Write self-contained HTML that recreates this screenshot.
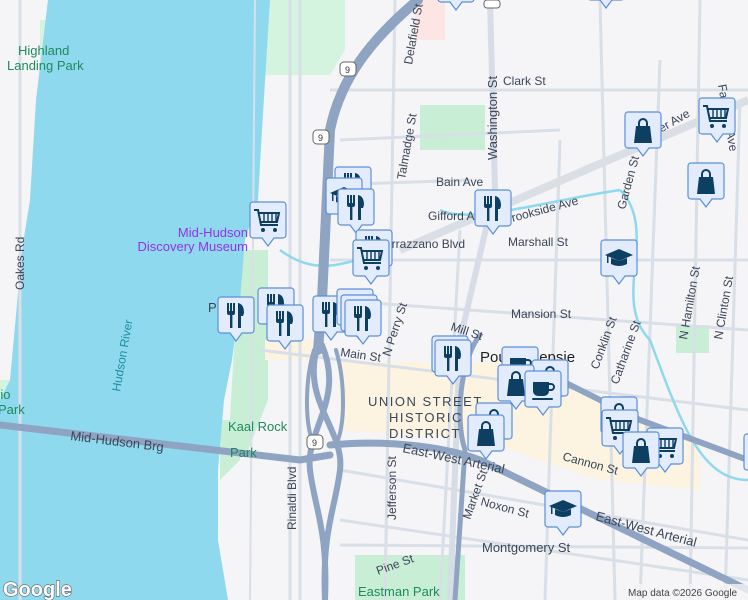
<!DOCTYPE html>
<html><head><meta charset="utf-8"><style>
html,body{margin:0;padding:0;width:748px;height:600px;overflow:hidden;background:#f5f4f6}
svg{display:block}
text{font-family:"Liberation Sans",sans-serif}
</style></head><body>
<svg width="748" height="600" viewBox="0 0 748 600" xmlns="http://www.w3.org/2000/svg">
<defs>
<g id="box"><path d="M0,3 a3,3 0 0 1 3,-3 h30 a3,3 0 0 1 3,3 v30 a3,3 0 0 1 -3,3 h-9 l-6,8 l-6,-8 h-9 a3,3 0 0 1 -3,-3z" fill="#e3ecfc" stroke="#5c8fd8" stroke-width="1.2"/></g>
<g id="fork"><use href="#box"/><g fill="#0d3f63"><rect x="9" y="6" width="2" height="10"/><rect x="12" y="6" width="2" height="10"/><rect x="15" y="6" width="2" height="10"/><rect x="9" y="14" width="8" height="4" rx="2"/><rect x="12" y="16" width="2.4" height="15"/><path d="M20,6 q6,1 6,10 l-1,3 h-2 v12 h-3z"/></g></g>
<g id="cart"><use href="#box"/><g fill="none" stroke="#0d3f63" stroke-width="2"><path d="M4,8 h4 l3,15 h17"/><path d="M9,11 h20 l-2,9 h-16"/><path d="M14,11 v9 M18,11 v9 M22,11 v9 M26,11 v9" stroke-width="1.4"/></g><circle cx="13" cy="28" r="2" fill="#0d3f63"/><circle cx="25" cy="28" r="2" fill="#0d3f63"/></g>
<g id="bag"><use href="#box"/><path d="M11,14 h14 l2,17 h-18z" fill="#0d3f63"/><path d="M14,15 v-4 a4,4 0 0 1 8,0 v4" fill="none" stroke="#0d3f63" stroke-width="2"/></g>
<g id="cup"><use href="#box"/><path d="M8,11 h16 v9 a5,5 0 0 1 -5,5 h-6 a5,5 0 0 1 -5,-5z" fill="#0d3f63"/><path d="M24,13 h2 a3,3 0 0 1 0,6 h-2" fill="none" stroke="#0d3f63" stroke-width="2"/><rect x="7" y="27" width="21" height="2" rx="1" fill="#0d3f63"/></g>
<g id="grad"><use href="#box"/><path d="M4,15 l14,-6 l14,6 l-14,6z" fill="#0d3f63"/><path d="M10,18 v6 q8,4 16,0 v-6 l-8,3z" fill="#0d3f63"/><rect x="6" y="16" width="1.5" height="7" fill="#0d3f63"/></g>
</defs>
<!-- parks -->
<path d="M262,0 H345 V50 L330,75 H262z" fill="#d4f4e0"/>
<path d="M415,0 h30 v40 h-30z" fill="#fde5e3"/>
<path d="M420,105 h65 v45 h-65z" fill="#c8efd5"/>
<path d="M240,250 h28 v150 l-20,50 h-20z" fill="#c8efd5"/>
<path d="M220,420 h20 v40 l-20,20z" fill="#c8efd5"/>
<path d="M355,555 h110 v45 h-110z" fill="#c8efd5"/>
<path d="M676,325 h33 v28 h-33z" fill="#c8efd5"/>
<path d="M40,20 h18 v55 h-18z" fill="#d4f4e0"/>
<path d="M0,380 h15 v30 h-15z" fill="#d4f4e0"/>
<!-- downtown -->
<path d="M340,362 L500,362 L560,385 L700,440 L700,490 L600,480 L480,440 L340,430z" fill="#fcf4e0"/>
<path d="M265,340 h60 v20 h-60z" fill="#fcf4e0"/>
<!-- river -->
<path d="M48,0 H270 L262,130 L258,200 L245,240 L240,300 L232,360 L224,400 L218,470 L218,540 L228,600 H0 V400 L10,380 L22,250 L30,200 L36,100z" fill="#8fd9ee"/>
<!-- streets -->
<g stroke="#d9dfe7" stroke-width="3" fill="none">
<path d="M20,0 V600"/><path d="M300,0 V600"/><path d="M290,0 V600"/>
<path d="M330,90 H748"/><path d="M340,140 L560,130"/><path d="M330,185 L470,180"/>
<path d="M395,0 L385,600"/><path d="M460,230 L440,600"/><path d="M560,140 L545,600"/>
<path d="M600,0 L615,600"/><path d="M660,60 L640,600"/><path d="M700,0 L690,600"/><path d="M740,100 L725,600"/>
<path d="M330,260 H748"/><path d="M330,300 L748,330"/><path d="M260,350 L748,410"/>
<path d="M340,470 L748,540"/><path d="M340,520 L748,580"/><path d="M340,545 L748,548"/>
<path d="M255,0 L250,600" stroke-width="2"/>
</g>
<path d="M400,250 L748,100" stroke="#dadfe6" stroke-width="8" fill="none"/>
<path d="M490,0 L495,190 L460,340 L450,600" stroke="#d6dde6" stroke-width="6" fill="none"/>
<path d="M440,210 C470,225 550,200 620,190 M620,190 C660,230 610,300 650,340 C680,420 700,480 748,480" stroke="#8fd9ee" stroke-width="2.5" fill="none"/>
<path d="M280,250 C320,280 350,260 390,250" stroke="#8fd9ee" stroke-width="2.5" fill="none"/>
<!-- highways -->
<g stroke="#8ea4c2" fill="none" stroke-linecap="round">
<path d="M418,0 C370,40 340,80 330,130 L322,300 L318,350" stroke-width="10"/>
<path d="M318,345 C300,400 345,430 340,470 C335,510 322,530 325,600" stroke-width="6"/>
<path d="M322,345 C345,400 305,430 310,470 C315,510 328,530 325,600" stroke-width="6"/>
<path d="M314,350 C305,380 305,420 312,440 M336,350 C345,380 345,420 338,440" stroke-width="4"/>
<path d="M0,425 L300,460 L330,455" stroke-width="7"/>
<path d="M330,445 C380,440 440,445 480,460 L748,590" stroke-width="7"/>
<path d="M480,335 C460,360 455,420 465,450 L455,600" stroke-width="5"/>
<path d="M560,380 L640,420 L748,460" stroke-width="6"/>
</g>
<!-- labels -->
<g font-size="12" fill="#3b4658">
<text x="503" y="85">Clark St</text><text x="436" y="186">Bain Ave</text><text x="428" y="220">Gifford A</text>
<text x="505" y="224" transform="rotate(-15 505 224)">Brookside Ave</text>
<text x="385" y="248">errazzano Blvd</text><text x="508" y="246">Marshall St</text>
<text x="511" y="318">Mansion St</text><text x="450" y="330" transform="rotate(18 450 330)">Mill St</text>
<text x="340" y="356" transform="rotate(8 340 356)">Main St</text>
<text x="562" y="460" transform="rotate(15 562 460)">Cannon St</text>
<text x="480" y="505" transform="rotate(15 480 505)">Noxon St</text>
<text x="482" y="552" font-size="13">Montgomery St</text>
<text x="378" y="575" transform="rotate(-20 378 575)">Pine St</text>
<text x="402" y="452" transform="rotate(12 402 452)" font-size="13">East-West Arterial</text>
<text x="595" y="520" transform="rotate(15 595 520)" font-size="13">East-West Arterial</text>
<text x="70" y="440" transform="rotate(7 70 440)" font-size="13">Mid-Hudson Brg</text>
<text x="497" y="160" transform="rotate(-90 497 160)" font-size="13">Washington St</text>
<text x="396" y="520" transform="rotate(-90 396 520)">Jefferson St</text>
<text x="296" y="530" transform="rotate(-90 296 530)">Rinaldi Blvd</text>
<text x="24" y="290" transform="rotate(-90 24 290)">Oakes Rd</text>
<text x="412" y="65" transform="rotate(-80 412 65)">Delafield St</text>
<text x="405" y="180" transform="rotate(-80 405 180)">Talmadge St</text>
<text x="625" y="210" transform="rotate(-75 625 210)">Garden St</text>
<text x="390" y="357" transform="rotate(-72 390 357)">N Perry St</text>
<text x="470" y="520" transform="rotate(-70 470 520)">Market St</text>
<text x="718" y="85" transform="rotate(80 718 85)">Fairview Ave</text>
<text x="598" y="370" transform="rotate(-70 598 370)">Conklin St</text>
<text x="618" y="385" transform="rotate(-70 618 385)">Catharine St</text>
<text x="687" y="340" transform="rotate(-80 687 340)">N Hamilton St</text>
<text x="722" y="340" transform="rotate(-80 722 340)">N Clinton St</text>
<text x="640" y="145" transform="rotate(-30 640 145)">Parker Ave</text>
</g>
<text x="368" y="406" font-size="13" fill="#3b4658" letter-spacing="1.5">UNION STREET</text>
<text x="389" y="422" font-size="13" fill="#3b4658" letter-spacing="1.5">HISTORIC</text>
<text x="389" y="438" font-size="13" fill="#3b4658" letter-spacing="1.5">DISTRICT</text>
<text x="480" y="362" font-size="15" fill="#202124">Poughkeepsie</text>
<g fill="#1f8a5c" font-size="13"><text x="18" y="55">Highland</text><text x="7" y="70">Landing Park</text><text x="228" y="431">Kaal Rock</text><text x="230" y="457">Park</text><text x="358" y="596">Eastman Park</text><text x="-4" y="399">rio</text><text x="-2" y="414">Park</text></g>
<text x="120" y="392" font-size="12" fill="#1e8fa0" transform="rotate(-80 120 392)">Hudson River</text>
<g fill="#9333ea" font-size="13" text-anchor="end"><text x="248" y="237">Mid-Hudson</text><text x="248" y="251">Discovery Museum</text></g>
<text x="208" y="312" font-size="13" fill="#3b4658">P</text>
<text x="3" y="596" font-size="20" font-weight="bold" fill="#fff" stroke="#5f6368" stroke-width="1.2" paint-order="stroke">Google</text>
<rect x="622" y="584" width="126" height="16" fill="#f5f4f6" opacity="0.8"/>
<text x="628" y="596" font-size="10" fill="#444">Map data ©2026 Google</text>
<g fill="#fff" stroke="#666" stroke-width="1"><rect x="340" y="62" width="16" height="14" rx="4"/><rect x="313" y="130" width="16" height="14" rx="4"/><rect x="307" y="435" width="16" height="14" rx="4"/><rect x="484" y="0" width="16" height="8" rx="3"/></g>
<g font-size="9" fill="#333"><text x="345" y="73">9</text><text x="318" y="141">9</text><text x="312" y="446">9</text></g>
<!-- markers -->
<use href="#fork" x="438" y="-34"/><use href="#fork" x="588" y="-36"/>
<use href="#cart" x="699" y="98"/><use href="#bag" x="625" y="112"/><use href="#bag" x="688" y="163"/>
<use href="#fork" x="335" y="167"/><use href="#grad" x="326" y="178"/><use href="#fork" x="338" y="189"/>
<use href="#fork" x="475" y="190"/><use href="#cart" x="250" y="202"/>
<use href="#fork" x="356" y="230"/><use href="#cart" x="353" y="240"/><use href="#grad" x="601" y="240"/>
<use href="#fork" x="218" y="297"/><use href="#fork" x="258" y="288"/><use href="#fork" x="267" y="305"/>
<use href="#fork" x="313" y="296"/><use href="#fork" x="337" y="289"/><use href="#fork" x="341" y="295"/><use href="#fork" x="345" y="300"/>
<use href="#fork" x="432" y="336"/><use href="#fork" x="435" y="340"/>
<use href="#cup" x="502" y="347"/><use href="#bag" x="532" y="360"/><use href="#bag" x="498" y="365"/><use href="#cup" x="525" y="371"/>
<use href="#bag" x="601" y="397"/><use href="#cart" x="602" y="410"/><use href="#cart" x="647" y="428"/><use href="#bag" x="623" y="432"/>
<use href="#bag" x="476" y="403"/><use href="#bag" x="468" y="415"/>
<use href="#bag" x="744" y="434"/><use href="#grad" x="545" y="491"/>
</svg>
</body></html>
